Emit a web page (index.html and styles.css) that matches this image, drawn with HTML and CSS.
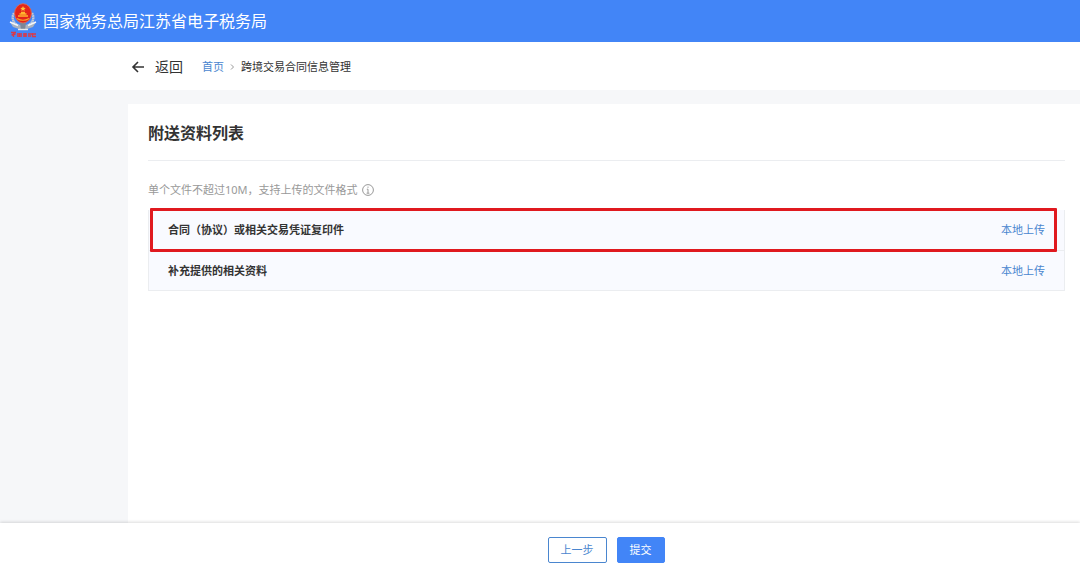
FILE: index.html
```html
<!DOCTYPE html>
<html lang="zh-CN">

<head>
    <meta charset="UTF-8">
    <meta name="viewport" content="width=device-width, initial-scale=1.0">
    <title>跨境交易合同信息管理</title>
    <link rel="stylesheet" href="styles.css">
</head>

<body>
    <header class="topbar">
        <svg class="emblem" viewBox="0 0 28 36" aria-hidden="true">
            <!-- wheat ears -->
            <g fill="none" stroke="#c3cad6" stroke-width="2.4" stroke-dasharray="1.8 .5">
                <path d="M5 10C2 15 4 21 12 24"></path>
                <path d="M23 10c3 5 1 11-7 14"></path>
            </g>
            <path d="M1 19l8 3 5-1 5 1 8-3-3 5-6 2H10l-6-2z" fill="#aab2c0"></path>
            <path d="M1 19l8 3.5m18-3.5l-8 3.5" stroke="#f6f7f9" stroke-width="1.5"></path>
            <path d="M11 20h6l-1 7h-4z" fill="#7c8799"></path>
            <path d="M9 26.5h10" stroke="#e6e8ec" stroke-width="1.4"></path>
            <!-- national emblem -->
            <ellipse cx="14" cy="10.3" rx="8.4" ry="9.6" fill="#e3241b" stroke="#ef6a48" stroke-width=".8"></ellipse>
            <path d="M14 3l.8 1.7 1.9.2-1.4 1.3.4 1.8-1.7-.9-1.7.9.4-1.8-1.4-1.3 1.9-.2z" fill="#ffc23d"></path>
            <path d="M9 13h10M10.5 11h7M12 9.5h4" stroke="#ffb52e" stroke-width="1.3"></path>
            <path d="M8 15.5q6 3.5 12 0" fill="none" stroke="#f8a62a" stroke-width="1.2"></path>
            <!-- red lettering mark under the emblem -->
            <path d="M2 29.5h5M4.5 29v5M2.5 32l4-1M8 31h5M8 33h5M10.5 30v4M14 31h4M14 33h4M16 30v4M19 31h3M19 33h3M23.5 30v4M22 31h5M23 33.5h4" fill="none" stroke="#d93a48" stroke-width="1.3"></path>
        </svg>
        <span class="site-name">国家税务总局江苏省电子税务局</span>
    </header>

    <nav class="crumb-bar" aria-label="面包屑">
        <button type="button" class="back">
            <svg class="back-icon" viewBox="0 0 14 14" aria-hidden="true">
                <path d="M13 7H2M7 2L2 7l5 5"></path>
            </svg>
            返回
        </button>
        <a class="link" href="#">首页</a>
        <svg class="chevron" viewBox="0 0 5 8" aria-hidden="true">
            <path d="M1 1.5L3.5 4 1 6.5"></path>
        </svg>
        <span>跨境交易合同信息管理</span>
    </nav>

    <main class="card">
        <h1>附送资料列表</h1>
        <p class="hint">
            单个文件不超过10M，支持上传的文件格式
            <svg class="info-icon" viewBox="0 0 12 12" aria-hidden="true">
                <circle cx="6" cy="6" r="5.4"></circle>
                <path d="M6 2.6v1.2M4.8 5.2H6v4M4.6 9.2h2.8"></path>
            </svg>
        </p>
        <ul class="files">
            <li class="file highlighted">
                <span>合同（协议）或相关交易凭证复印件</span>
                <button type="button" class="link">本地上传</button>
            </li>
            <li class="file">
                <span>补充提供的相关资料</span>
                <button type="button" class="link">本地上传</button>
            </li>
        </ul>
    </main>

    <footer class="actions">
        <button type="button" class="btn">上一步</button>
        <button type="button" class="btn btn-primary">提交</button>
    </footer>
</body>

</html>
```

FILE: styles.css
```css
*,
*::before,
*::after {
    box-sizing: border-box;
    margin: 0;
    padding: 0;
}

:root {
    --primary: #4285f7;
    --link: #4a86cf;
    --text: #333;
    --muted: #999;
    --line: #ebedf0;
    --page: #f6f7f9;
    --gutter: 128px;
}

body {
    min-height: 100vh;
    display: flex;
    flex-direction: column;
    background-color: var(--page);
    color: var(--text);
    font-family: "Noto Sans", "Noto Sans CJK SC", sans-serif;
    font-size: 11px;
    line-height: 16px;
}

button {
    border: none;
    background: none;
    color: inherit;
    font: inherit;
    cursor: pointer;
}

.link {
    color: var(--link);
    text-decoration: none;
}

.topbar {
    height: 42px;
    display: flex;
    align-items: center;
    gap: 6px;
    padding: 0 9px;
    background-color: var(--primary);
    color: #fff;
}

.emblem {
    width: 28px;
    height: 36px;
}

.site-name {
    font-size: 16px;
    line-height: 24px;
}

.crumb-bar {
    height: 48px;
    display: flex;
    align-items: center;
    gap: 6px;
    padding: 2px 0 0 calc(var(--gutter) + 3px);
    background-color: #fff;
}

.back {
    display: flex;
    align-items: center;
    gap: 10px;
    margin-right: 13px;
    font-size: 14px;
    line-height: 20px;
}

.back-icon {
    width: 14px;
    height: 14px;
    fill: none;
    stroke: currentColor;
    stroke-width: 1.6;
}

.chevron {
    width: 5px;
    height: 8px;
    fill: none;
    stroke: var(--muted);
}

.card {
    flex: 1;
    margin: 14px 0 0 var(--gutter);
    padding: 0 15px 20px 20px;
    background-color: #fff;
}

h1 {
    padding: 17px 0 15px;
    border-bottom: 1px solid var(--line);
    font-size: 16px;
    line-height: 24px;
}

.hint {
    display: flex;
    align-items: center;
    gap: 4px;
    padding: 21px 0 12px;
    color: var(--muted);
}

.info-icon {
    width: 12px;
    height: 12px;
    fill: none;
    stroke: currentColor;
}

.files {
    list-style: none;
    border: 1px solid var(--line);
    border-top: none;
    background-color: #f9faff;
}

.file {
    position: relative;
    height: 40px;
    display: flex;
    align-items: center;
    justify-content: space-between;
    padding: 0 19px;
    font-weight: bold;
}

.file + .file {
    border-top: 1px solid var(--line);
}

.file .link {
    font-weight: normal;
}

/* red frame laid over the required item */
.highlighted::after {
    content: "";
    position: absolute;
    inset: -2px 7px -2px 1px;
    border: 3px solid #e0191f;
    border-radius: 1px;
    pointer-events: none;
    z-index: 1;
}

.actions {
    position: relative;
    display: flex;
    justify-content: center;
    gap: 10px;
    padding: 14px 0 6px calc(var(--gutter) + 4px);
    background-color: #fff;
    box-shadow: 0 -1px 3px rgba(0, 0, 0, 0.14);
}

.btn {
    height: 26px;
    padding: 0 12px;
    border: 1px solid var(--link);
    border-radius: 2px;
    background-color: #fff;
    color: var(--link);
}

.btn-primary {
    border-color: var(--primary);
    background-color: var(--primary);
    color: #fff;
}
```
